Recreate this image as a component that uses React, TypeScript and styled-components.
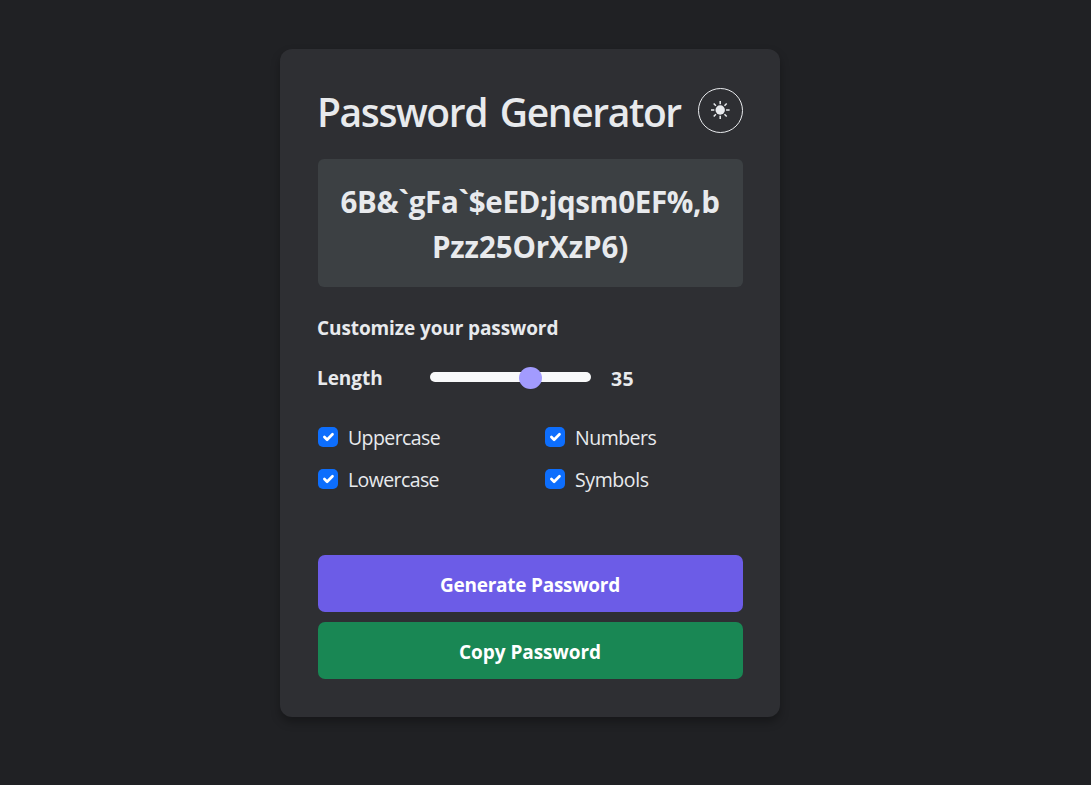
import React, { useState } from "react";
import styled, { createGlobalStyle } from "styled-components";

const GlobalStyle = createGlobalStyle`
  * { box-sizing: border-box; }
  body {
    margin: 0;
    background: #202124;
    color: #e8eaed;
    font-family: "Segoe UI", "Open Sans", "Noto Sans", sans-serif;
    font-size: 19.5px;
  }
`;

const Page = styled.main`
  display: flex;
  justify-content: center;
  align-items: flex-start;
  min-height: 785px;
  padding: 49px 31px 0 0;
`;

const Card = styled.section`
  display: flex;
  flex-direction: column;
  width: 500px;
  height: 668px;
  padding: 39px 37px 38px 38px;
  border-radius: 12px;
  background: #2e2f33;
  box-shadow: 0 5px 10px rgba(0, 0, 0, 0.3);
`;

const Header = styled.header`
  display: flex;
  align-items: center;
  justify-content: space-between;
  height: 45px;
`;

const Title = styled.h1`
  margin: 0 0 0 -1px;
  padding-top: 2px;
  font-size: 39px;
  font-weight: 600;
  line-height: 48px;
  letter-spacing: -1.4px;
  word-spacing: 4px;
  white-space: nowrap;
`;

const ThemeButton = styled.button`
  display: grid;
  place-items: center;
  flex: none;
  width: 45px;
  height: 45px;
  padding: 0;
  border: 1px solid #e8eaed;
  border-radius: 50%;
  background: transparent;
  color: #e8eaed;
`;

const Output = styled.div`
  height: 128px;
  margin-top: 26px;
  padding: 20px;
  border-radius: 6px;
  background: #3c4043;
  font-size: 29.5px;
  font-weight: 700;
  line-height: 45px;
  text-align: center;
`;

const OutputLine = styled.span<{ $tracking: number }>`
  display: block;
  margin-left: -1px;
  letter-spacing: ${(p) => p.$tracking}px;
  white-space: nowrap;
`;

const Subtitle = styled.h2`
  margin: 26px 0 0 -1px;
  font-size: 19px;
  font-weight: 700;
  line-height: 30px;
  letter-spacing: -0.1px;
`;

const LengthRow = styled.div`
  display: flex;
  align-items: center;
  height: 30px;
  margin-top: 20px;
  font-size: 19px;
  font-weight: 700;
  letter-spacing: -0.05px;
`;

const LengthLabel = styled.label`
  width: 113px;
  margin-left: -1px;
`;

const LengthValue = styled.span`
  font-size: 19.5px;
  letter-spacing: 0.3px;
`;

const Slider = styled.input`
  appearance: none;
  width: 161px;
  height: 10px;
  margin: 0 20px 2px 0;
  border-radius: 5px;
  background: #f8f9fa;

  &::-webkit-slider-thumb {
    appearance: none;
    width: 23px;
    height: 22px;
    margin-top: 1px;
    border: 0;
    border-radius: 50%;
    background: #a29bfe;
  }
`;

const Options = styled.div`
  display: grid;
  grid-template-columns: 227px 1fr;
  grid-auto-rows: 30px;
  row-gap: 12px;
  margin-top: 30px;
`;

const Option = styled.label<{ $tracking: number }>`
  display: flex;
  align-items: center;
  gap: 10px;
  line-height: 30px;
  letter-spacing: ${(p) => p.$tracking}px;
`;

const Check = styled.input`
  appearance: none;
  width: 20px;
  height: 20px;
  margin: 0;
  border-radius: 5px;
  background: #0d6efd;
  grid-area: 1 / 1;
`;

const CheckBox = styled.span`
  display: grid;
  place-items: center;
  height: 20px;
  margin-bottom: 2px;

  svg {
    grid-area: 1 / 1;
    pointer-events: none;
  }
`;

const Actions = styled.div`
  display: flex;
  flex-direction: column;
  gap: 10px;
  margin-top: auto;
`;

const ActionButton = styled.button<{ $color: string; $tracking: number }>`
  height: 57px;
  padding: 3px 1px 0 0;
  border: 0;
  border-radius: 7px;
  background: ${(p) => p.$color};
  color: #fff;
  font: 700 19px "Segoe UI", "Open Sans", "Noto Sans", sans-serif;
  letter-spacing: ${(p) => p.$tracking}px;
`;

const options = [
  { name: "Uppercase", tracking: -0.6 },
  { name: "Numbers", tracking: -0.5 },
  { name: "Lowercase", tracking: -0.6 },
  { name: "Symbols", tracking: -0.4 },
];

function SunIcon() {
  return (
    <svg width="21" height="21" viewBox="0 0 21 21" fill="none" stroke="currentColor" strokeWidth="1.5">
      <circle cx="10.2" cy="10" r="4.7" fill="currentColor" stroke="none" />
      <path d="M10.2 .9v3.4M10.2 15.7v3.3M1 10h3.3M16.1 10h3.5M3.7 3.5l2.2 2.2M14.5 14.3l2.2 2.2M3.7 16.5l2.2-2.2M14.5 5.7l2.2-2.2" />
    </svg>
  );
}

export default function App() {
  const [length, setLength] = useState(35);

  return (
    <>
      <GlobalStyle />
      <Page>
        <Card>
          <Header>
            <Title>Password Generator</Title>
            <ThemeButton aria-label="Toggle theme">
              <SunIcon />
            </ThemeButton>
          </Header>
          <Output>
            <OutputLine $tracking={-0.32}>{"6B&`gFa`$eED;jqsm0EF%,b"}</OutputLine>
            <OutputLine $tracking={-0.1}>Pzz25OrXzP6)</OutputLine>
          </Output>
          <Subtitle>Customize your password</Subtitle>
          <LengthRow>
            <LengthLabel htmlFor="length">Length</LengthLabel>
            <Slider
              id="length"
              type="range"
              min={4}
              max={52}
              value={length}
              onChange={(e) => setLength(Number(e.target.value))}
            />
            <LengthValue>{length}</LengthValue>
          </LengthRow>
          <Options>
            {options.map((o) => (
              <Option key={o.name} $tracking={o.tracking}>
                <CheckBox>
                  <Check type="checkbox" defaultChecked />
                  <svg width="18" height="18" viewBox="0 0 20 20" fill="none" stroke="#fff" strokeWidth="3" strokeLinecap="round" strokeLinejoin="round">
                    <path d="M6 10l3 3 6-6" />
                  </svg>
                </CheckBox>
                {o.name}
              </Option>
            ))}
          </Options>
          <Actions>
            <ActionButton $color="#6c5ce7" $tracking={-0.25}>Generate Password</ActionButton>
            <ActionButton $color="#198754" $tracking={-0.05}>Copy Password</ActionButton>
          </Actions>
        </Card>
      </Page>
    </>
  );
}
